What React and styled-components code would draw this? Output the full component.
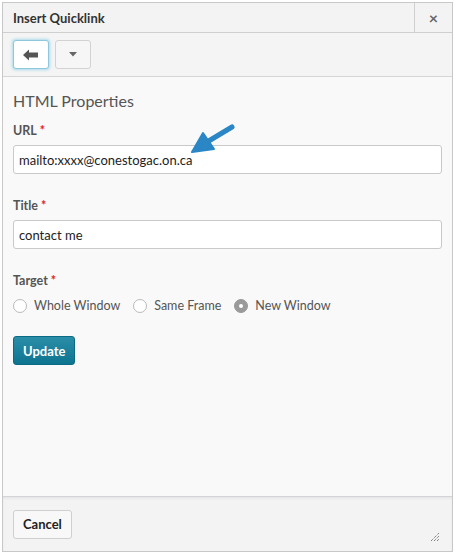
import React from "react";
import styled, { createGlobalStyle } from "styled-components";

const Global = createGlobalStyle`
  html, body { margin: 0; padding: 0; background: #fff; }
  body { font-family: Lato, "Open Sans", sans-serif; color: #333; }
  * { box-sizing: border-box; }
`;

const Dialog = styled.div`
  position: relative;
  margin: 2px;
  width: 451px;
  height: 550px;
  border: 1px solid #c8c8c8;
  display: flex;
  flex-direction: column;
  background: #f9f9f9;
`;

const Header = styled.div`
  height: 30px;
  display: flex;
  align-items: stretch;
  background: #f3f3f3;
  border-bottom: 1px solid #cfcfcf;
`;

const Title = styled.div`
  flex: 1;
  padding-left: 10px;
  display: flex;
  align-items: center;
  font-size: 13px;
  font-weight: 700;
  color: #333;
`;

const Close = styled.div`
  width: 38px;
  border-left: 1px solid #cfcfcf;
  display: flex;
  align-items: center;
  justify-content: center;
  font-size: 16px;
  font-weight: 700;
  color: #666;
`;

const Toolbar = styled.div`
  height: 44px;
  display: flex;
  align-items: center;
  gap: 6px;
  padding: 0 10px;
  background: #f4f4f4;
  border-bottom: 1px solid #d6d6d6;
`;

const ToolButton = styled.div`
  width: 36px;
  height: 29px;
  border-radius: 3px;
  display: flex;
  align-items: center;
  justify-content: center;
  background: ${(p) => (p.$focus ? "#fff" : "#f6f6f6")};
  border: 1px solid ${(p) => (p.$focus ? "#8fc8dc" : "#d2d2d2")};
  box-shadow: ${(p) => (p.$focus ? "0 0 3px 1px #a9daea" : "none")};
`;

const Body = styled.div`
  flex: 1;
  padding: 14px 10px 0;
  display: flex;
  flex-direction: column;
`;

const Heading = styled.div`
  font-size: 16px;
  color: #555;
  margin-bottom: 12px;
  line-height: 20px;
`;

const Label = styled.div`
  font-size: 12.5px;
  font-weight: 700;
  color: #555;
  margin-bottom: ${(p) => p.$gap || 7}px;
  span { color: #e0221a; margin-left: 3px; }
`;

const Field = styled.div`
  height: 29px;
  background: #fff;
  border: 1px solid #c9c9c9;
  border-radius: 3px;
  display: flex;
  align-items: center;
  padding: 0 5px;
  font-size: 13px;
  color: #222;
  margin-bottom: 24px;
`;

const RadioRow = styled.div`
  display: flex;
  align-items: center;
  gap: 13px;
  margin-bottom: 23px;
`;

const RadioItem = styled.label`
  display: flex;
  align-items: center;
  gap: 7px;
  font-size: 12.5px;
  color: #555;
`;

const Dot = styled.span`
  width: 14px;
  height: 14px;
  border-radius: 50%;
  border: 1px solid ${(p) => (p.$on ? "#999" : "#bbb")};
  background: ${(p) => (p.$on ? "#9a9a9a" : "#fff")};
  display: flex;
  align-items: center;
  justify-content: center;
  &::after {
    content: "";
    width: 4px;
    height: 4px;
    border-radius: 50%;
    background: ${(p) => (p.$on ? "#fff" : "transparent")};
  }
`;

const Primary = styled.div`
  align-self: flex-start;
  height: 29px;
  padding: 0 9px;
  border-radius: 3px;
  background: linear-gradient(#2b8ea9, #0d7490);
  border: 1px solid #0c6a84;
  color: #fff;
  font-size: 13px;
  font-weight: 700;
  display: flex;
  align-items: center;
`;

const Footer = styled.div`
  height: 55px;
  background: #f3f3f3;
  border-top: 1px solid #d4d4d4;
  box-shadow: inset 0 2px 3px -1px #e0e0e8;
  display: flex;
  align-items: center;
  justify-content: space-between;
  padding: 0 12px 0 10px;
`;

const Secondary = styled.div`
  height: 29px;
  padding: 0 9px;
  border-radius: 3px;
  background: #f8f8f8;
  border: 1px solid #cfcfcf;
  color: #222;
  font-size: 13px;
  font-weight: 700;
  display: flex;
  align-items: center;
`;

const Grip = styled.svg`
  align-self: flex-end;
  margin-bottom: 9px;
`;

const Pointer = styled.svg`
  position: absolute;
  left: 180px;
  top: 118px;
`;

const required = <span>*</span>;

export default function App() {
  return (
    <>
      <Global />
      <Dialog>
        <Header>
          <Title>Insert Quicklink</Title>
          <Close>×</Close>
        </Header>
        <Toolbar>
          <ToolButton $focus>
            <svg width="16" height="12" viewBox="0 0 16 12">
              <path d="M0 6 L6 0.5 L6 3.5 L15 3.5 L15 8.5 L6 8.5 L6 11.5 Z" fill="#555" />
            </svg>
          </ToolButton>
          <ToolButton>
            <svg width="8" height="5" viewBox="0 0 8 5">
              <path d="M0 0 L8 0 L4 4.5 Z" fill="#666" />
            </svg>
          </ToolButton>
        </Toolbar>
        <Body>
          <Heading>HTML Properties</Heading>
          <Label>URL{required}</Label>
          <Field>mailto:xxxx@conestogac.on.ca</Field>
          <Label>Title{required}</Label>
          <Field>contact me</Field>
          <Label $gap={10}>Target{required}</Label>
          <RadioRow>
            <RadioItem><Dot />Whole Window</RadioItem>
            <RadioItem><Dot />Same Frame</RadioItem>
            <RadioItem><Dot $on />New Window</RadioItem>
          </RadioRow>
          <Primary>Update</Primary>
        </Body>
        <Footer>
          <Secondary>Cancel</Secondary>
          <Grip width="10" height="10" viewBox="0 0 10 10">
            <path d="M1 9 L9 1 M4 9 L9 4 M7 9 L9 7" stroke="#555" strokeWidth="1" strokeDasharray="1 1" />
          </Grip>
        </Footer>
        <Pointer width="60" height="40" viewBox="0 0 60 40">
          <path d="M49 6 L24 21" stroke="#2a86c4" strokeWidth="5" strokeLinecap="round" />
          <path d="M9 31 L20 12 L31 28 Z" fill="#2a86c4" stroke="#2a86c4" strokeLinejoin="round" strokeWidth="2" />
        </Pointer>
      </Dialog>
    </>
  );
}
